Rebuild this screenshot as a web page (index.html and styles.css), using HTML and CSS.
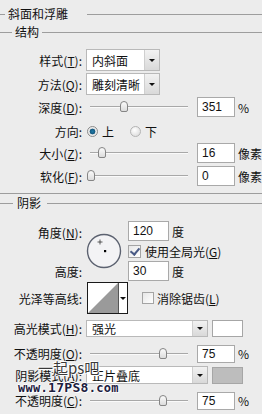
FILE: index.html
```html
<!DOCTYPE html>
<html lang="zh-CN">
<head>
  <meta charset="UTF-8" />
  <title>斜面和浮雕</title>
  <link rel="stylesheet" href="styles.css">
</head>
<body>
  <div class="panel">
    <div class="group-title title-main"><span class="lead"></span><span class="caption">斜面和浮雕</span><span class="rule"></span></div>
    <div class="group-title title-sub"><span class="lead"></span><span class="caption">结构</span><span class="rule"></span></div>

    <div class="row row-style">
      <span class="lbl">样式(<u>T</u>):</span>
      <div class="select select-short"><span class="value">内斜面</span><span class="drop"><i></i></span></div>
    </div>
    <div class="row row-method">
      <span class="lbl">方法(<u>Q</u>):</span>
      <div class="select select-short"><span class="value">雕刻清晰</span><span class="drop"><i></i></span></div>
    </div>

    <div class="row row-depth">
      <span class="lbl">深度(<u>D</u>):</span>
      <div class="slider"><span class="track"></span><span class="thumb" style="left: 34px"></span></div>
      <span class="field">351</span><span class="unit">%</span>
    </div>
    <div class="row row-dir">
      <span class="lbl">方向:</span>
      <span class="radio checked"></span><span class="radio-text">上</span>
      <span class="radio"></span><span class="radio-text">下</span>
    </div>
    <div class="row row-size">
      <span class="lbl">大小(<u>Z</u>):</span>
      <div class="slider"><span class="track"></span><span class="thumb" style="left: 12px"></span></div>
      <span class="field">16</span><span class="unit">像素</span>
    </div>
    <div class="row row-soften">
      <span class="lbl">软化(<u>F</u>):</span>
      <div class="slider"><span class="track"></span><span class="thumb" style="left: 1px"></span></div>
      <span class="field">0</span><span class="unit">像素</span>
    </div>

    <div class="divider"></div>

    <div class="group-title title-shadow"><span class="lead"></span><span class="caption">阴影</span><span class="rule"></span></div>

    <div class="angle-block">
      <span class="lbl lbl-angle">角度(<u>N</u>):</span>
      <div class="dial">
        <svg width="36" height="36" viewBox="0 0 36 36">
          <circle cx="18" cy="18" r="16.5" fill="#f3f3f5" stroke="#5c6270" stroke-width="1.4"/>
          <path d="M14 6.5v5M11.5 9h5" stroke="#333" stroke-width="0.8"/>
          <rect x="18" y="17" width="2.2" height="2.2" fill="#000"/>
        </svg>
      </div>
      <div class="angle-line line-angle"><span class="field field-wide">120</span><span class="unit">度</span></div>
      <div class="check-line"><span class="checkbox checked"></span><span>使用全局光(<u>G</u>)</span></div>
      <span class="lbl lbl-alt">高度:</span>
      <div class="angle-line line-alt"><span class="field field-wide">30</span><span class="unit">度</span></div>
    </div>

    <div class="row row-contour">
      <span class="lbl">光泽等高线:</span>
      <div class="contour">
        <svg class="curve" width="30" height="30" viewBox="0 0 30 30">
          <polygon points="0,30 30,0 30,30" fill="#9a9a9a"/>
        </svg>
        <span class="contour-drop"><i></i></span>
      </div>
      <span class="checkbox aa"></span><span>消除锯齿(<u>L</u>)</span>
    </div>

    <div class="row row-hl-mode">
      <span class="lbl">高光模式(<u>H</u>):</span>
      <div class="select select-long"><span class="value">强光</span><span class="drop"><i></i></span></div>
      <span class="swatch swatch-white"></span>
    </div>
    <div class="row row-hl-opacity">
      <span class="lbl">不透明度(<u>O</u>):</span>
      <div class="slider"><span class="track"></span><span class="thumb" style="left: 73px"></span></div>
      <span class="field">75</span><span class="unit">%</span>
    </div>
    <div class="row row-sh-mode">
      <span class="lbl">阴影模式(<u>A</u>):</span>
      <div class="select select-long"><span class="value">正片叠底</span><span class="drop"><i></i></span></div>
      <span class="swatch swatch-gray"></span>
    </div>
    <div class="row row-sh-opacity">
      <span class="lbl">不透明度(<u>C</u>):</span>
      <div class="slider"><span class="track"></span><span class="thumb" style="left: 73px"></span></div>
      <span class="field">75</span><span class="unit">%</span>
    </div>

    <div class="watermark">
      <span class="wm-cn">一起ps吧</span>
      <span class="wm-url">www.<b>17PS8</b>.com</span>
    </div>
  </div>
</body>
</html>
```

FILE: styles.css
```css
* {
  box-sizing: border-box;
}
body {
  margin: 0;
  background: #ececec;
  font-family: "Noto Sans CJK SC", "Noto Sans", sans-serif;
  font-size: 12px;
  color: #111;
  width: 262px;
  height: 414px;
  overflow: hidden;
}
.panel {
  position: relative;
  width: 262px;
  height: 414px;
}
u {
  text-decoration: underline;
  text-underline-offset: 1px;
}

/* group headers */
.group-title {
  display: flex;
  align-items: center;
  height: 14px;
  line-height: 14px;
}
.group-title .lead,
.group-title .rule {
  height: 1px;
  background: #9d9d9d;
}
.group-title .rule {
  flex: 1;
}
.title-main {
  margin-top: 7px;
}
.title-main .lead {
  width: 5px;
}
.title-main .caption {
  margin: 0 19px 0 3px;
}
.title-sub {
  margin-top: 4px;
}
.title-sub .lead {
  width: 12px;
}
.title-sub .caption {
  margin: 0 3px;
}
.title-shadow {
  margin-top: 2px;
}
.title-shadow .lead {
  width: 13px;
}
.title-shadow .caption {
  margin: 0 6px 0 4px;
}
.divider {
  margin-top: 7px;
  height: 1px;
  background: #9d9d9d;
}

/* rows */
.row {
  display: flex;
  align-items: center;
  height: 20px;
}
.lbl {
  width: 82px;
  flex: none;
  text-align: right;
  white-space: nowrap;
}
.row-style { margin-top: 10px; height: 22px; }
.row-method { margin-top: 2px; height: 22px; }
.row-depth { margin-top: 2px; }
.row-dir { margin-top: 4px; }
.row-size { margin-top: 2px; }
.row-soften { margin-top: 3px; }
.row-contour { margin-top: 1px; height: 32px; }
.row-hl-mode { margin-top: 6px; height: 17px; }
.row-hl-opacity { margin-top: 7px; height: 19px; }
.row-sh-mode { margin-top: 3px; height: 18px; }
.row-sh-opacity { margin-top: 7px; height: 19px; }

/* select boxes */
.select {
  margin-left: 4px;
  height: 100%;
  display: flex;
  background: #fff;
  border: 1px solid #b9b9b9;
}
.select-short { width: 74px; }
.select-long { width: 122px; }
.select .value {
  flex: 1;
  padding-left: 5px;
  display: flex;
  align-items: center;
  overflow: hidden;
  white-space: nowrap;
}
.select .drop {
  width: 15px;
  flex: none;
  border-left: 1px solid #cfcfcf;
  background: linear-gradient(#f2f2f2, #d9d9d9);
  display: flex;
  align-items: center;
  justify-content: center;
}
.select .drop i,
.contour-drop i {
  width: 0;
  height: 0;
  border-left: 3px solid transparent;
  border-right: 3px solid transparent;
  border-top: 3px solid #111;
}

/* sliders */
.slider {
  position: relative;
  margin-left: 4px;
  width: 107px;
  height: 100%;
  display: flex;
  align-items: center;
}
.slider .track {
  margin-left: 4px;
  width: 98px;
  height: 2px;
  border-top: 1px solid #a8a8a8;
  border-bottom: 1px solid #fafafa;
}
.slider .thumb {
  position: absolute;
  top: 50%;
  margin-top: -6px;
  width: 8px;
  height: 11px;
  border: 1px solid #858585;
  border-radius: 4px 4px 2px 2px;
  background: linear-gradient(#fbfbfb, #dcdcdc);
}

/* text fields */
.field {
  margin-left: 4px;
  width: 38px;
  height: 20px;
  padding-left: 4px;
  background: #fff;
  border: 1px solid #a9a9a9;
  display: flex;
  align-items: center;
  font-family: "Liberation Sans", "Noto Sans", sans-serif;
  font-size: 12px;
}
.row-hl-opacity .field,
.row-sh-opacity .field {
  height: 18px;
}
.field-wide {
  margin-left: 0;
  width: 41px;
}
.unit {
  margin-left: 3px;
}

/* radios */
.radio {
  width: 11px;
  height: 11px;
  flex: none;
  border-radius: 50%;
  border: 1px solid #b4b4b4;
  background: radial-gradient(circle at 40% 35%, #ffffff, #d6d6d6);
}
.radio.checked {
  margin-left: 5px;
  border-color: #8a8a8a;
  background: radial-gradient(circle at 50% 50%, #1d7aa8 0, #17597f 2.6px, #e4e4e4 3.2px, #f4f4f4 5px);
}
.radio-text {
  margin-left: 4px;
  margin-right: 16px;
}

/* angle */
.angle-block {
  margin-top: 11px;
  display: grid;
  grid-template-columns: 82px 46px 1fr;
  grid-template-rows: 20px 20px 20px;
  align-items: center;
}
.lbl-angle {
  grid-column: 1;
  grid-row: 1;
  padding-top: 2px;
}
.lbl-alt {
  grid-column: 1;
  grid-row: 3;
}
.dial {
  grid-column: 2;
  grid-row: 1 / span 3;
  margin-left: 4px;
  width: 36px;
  height: 36px;
  align-self: center;
}
.dial svg {
  display: block;
}
.angle-line {
  grid-column: 3;
  display: flex;
  align-items: center;
}
.line-angle {
  grid-row: 1;
}
.line-alt {
  grid-row: 3;
}
.check-line {
  grid-column: 3;
  grid-row: 2;
  display: flex;
  align-items: center;
  gap: 4px;
}
.checkbox {
  width: 13px;
  height: 13px;
  flex: none;
  border: 1px solid #a4a4a4;
  background: linear-gradient(135deg, #e6e6e6, #ffffff);
  position: relative;
}
.checkbox.checked::after {
  content: "";
  position: absolute;
  left: 3px;
  top: 0px;
  width: 4px;
  height: 7px;
  border-right: 2px solid #4a5b86;
  border-bottom: 2px solid #4a5b86;
  transform: rotate(40deg);
}
.checkbox.aa {
  width: 12px;
  height: 12px;
  margin: 0 3px 0 14px;
}

/* contour */
.contour {
  margin-left: 5px;
  width: 41px;
  height: 32px;
  display: flex;
  border: 1px solid #1a1a1a;
  background: #fff;
}
.contour .curve {
  display: block;
}
.contour-drop {
  flex: 1;
  border-left: 1px solid #555;
  display: flex;
  align-items: center;
  justify-content: center;
}

/* swatches */
.swatch {
  margin-left: 4px;
  width: 31px;
  height: 17px;
  border: 1px solid #a6a6a6;
}
.swatch-white {
  background: #fff;
}
.swatch-gray {
  background: #bdbdbd;
}

/* watermark over the shadow mode row */
.watermark {
  position: absolute;
  left: 18px;
  top: 352px;
  width: 110px;
  pointer-events: none;
}
.wm-cn {
  position: absolute;
  left: 20px;
  top: 0;
  font-size: 15px;
  line-height: 18px;
  color: #3a3a3a;
  text-shadow: 0 0 1px #fff, 1px 1px 0 #fff, -1px -1px 0 #fff;
  white-space: nowrap;
}
.wm-url {
  position: absolute;
  left: 0;
  top: 22px;
  font-family: "DejaVu Sans Mono", monospace;
  font-size: 12px;
  line-height: 14px;
  font-weight: bold;
  letter-spacing: 0.3px;
  color: #1d2040;
  text-shadow: 1px 1px 0 #fff, -1px 0 0 #fff, 0 -1px 0 #fff;
  white-space: nowrap;
}
.wm-url b {
  font-size: 13px;
}
```
